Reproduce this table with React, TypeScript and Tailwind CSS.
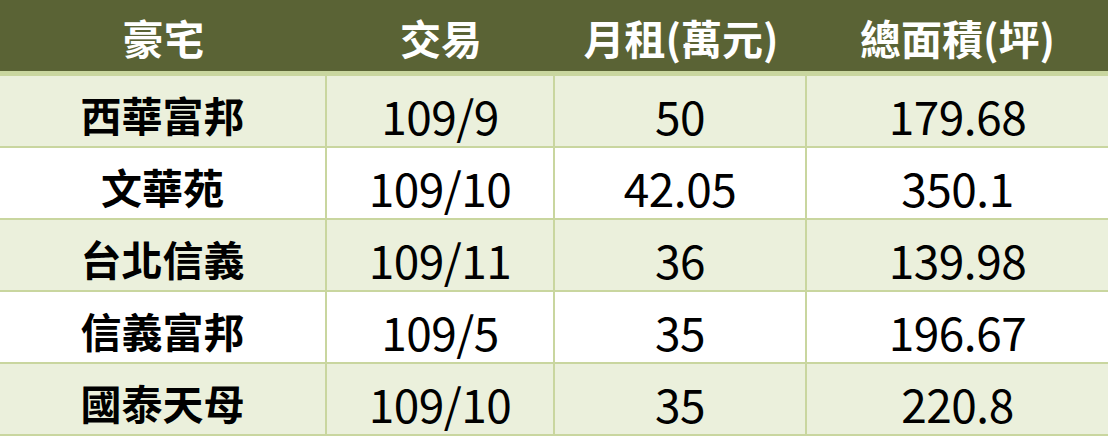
const rows = [
  { name: "西華富邦", date: "109/9", rent: "50", area: "179.68" },
  { name: "文華苑", date: "109/10", rent: "42.05", area: "350.1" },
  { name: "台北信義", date: "109/11", rent: "36", area: "139.98" },
  { name: "信義富邦", date: "109/5", rent: "35", area: "196.67" },
  { name: "國泰天母", date: "109/10", rent: "35", area: "220.8" },
];

const font = { fontFamily: '"Noto Sans CJK TC", "Noto Sans", sans-serif' };

export default function App() {
  return (
    <div className="w-[1108px] h-[436px] bg-white overflow-hidden" style={font}>
      {/* header */}
      <div className="flex h-[76px] bg-[#5a6335] border-b-[5px] border-[#c9d69f] text-white font-bold text-[41px]">
        <div className="w-[327px] flex items-center justify-center pt-[4px]">豪宅</div>
        <div className="w-[228px] flex items-center justify-center pt-[4px]">交易</div>
        <div className="w-[252px] flex items-center justify-center pt-[4px]">月租(萬元)</div>
        <div className="flex-1 flex items-center justify-center pt-[4px]">總面積(坪)</div>
      </div>

      {rows.map((r, i) => (
        <div
          key={i}
          className={`flex h-[72px] border-b-2 border-[#c9d69f] text-black ${i % 2 === 0 ? "bg-[#ebf0dc]" : "bg-white"}`}
        >
          <div className="w-[327px] border-r-2 border-[#c9d69f] flex items-center justify-center font-bold text-[41px] pt-[8px]">
            {r.name}
          </div>
          <div className="w-[228px] border-r-2 border-[#c9d69f] flex items-center justify-center text-[46px] tracking-[-0.5px] pt-[8px]">
            {r.date}
          </div>
          <div className="w-[252px] border-r-2 border-[#c9d69f] flex items-center justify-center text-[46px] tracking-[-0.5px] pt-[8px]">
            {r.rent}
          </div>
          <div className="flex-1 flex items-center justify-center text-[46px] tracking-[-0.5px] pt-[8px]">{r.area}</div>
        </div>
      ))}
    </div>
  );
}
